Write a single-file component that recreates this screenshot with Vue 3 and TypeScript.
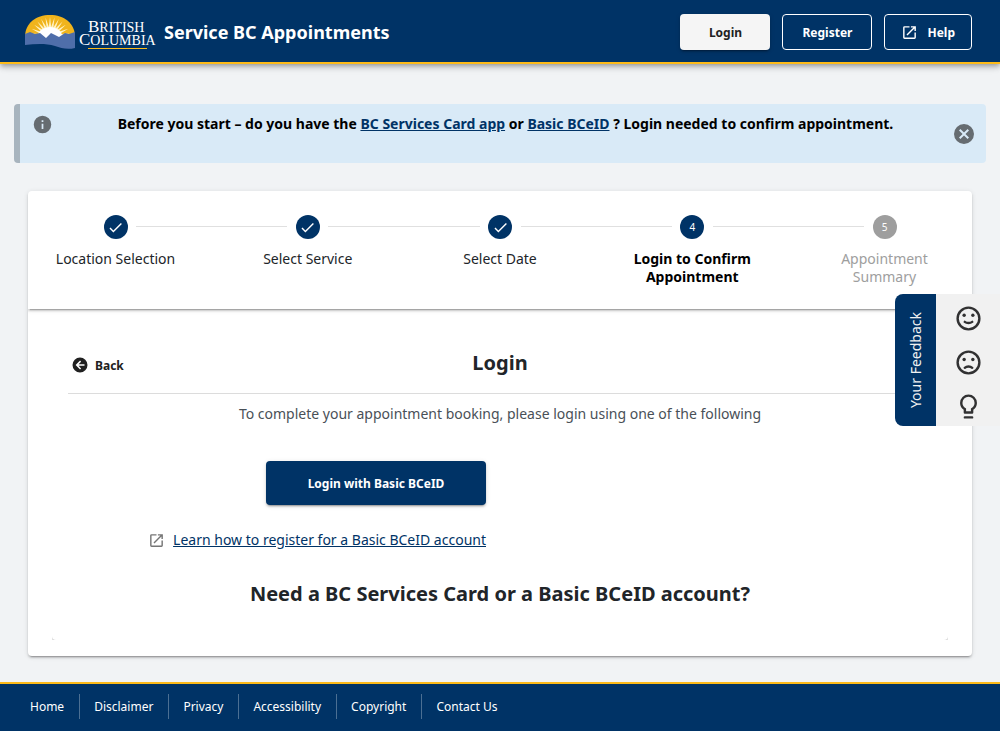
<script setup lang="ts">
import { ref } from 'vue'

interface Step {
  label: string
  state: 'done' | 'current' | 'upcoming'
}

const steps: Step[] = [
  { label: 'Location Selection', state: 'done' },
  { label: 'Select Service', state: 'done' },
  { label: 'Select Date', state: 'done' },
  { label: 'Login to Confirm Appointment', state: 'current' },
  { label: 'Appointment Summary', state: 'upcoming' },
]

const footerLinks: string[] = ['Home', 'Disclaimer', 'Privacy', 'Accessibility', 'Copyright', 'Contact Us']

// Angles, in degrees, of the rays of the rising sun
const rays: number[] = [-80, -66, -52, -39, -26, -13, 0, 13, 26, 39, 52, 66, 80]

const alertOpen = ref(true)
</script>

<template>
  <div class="page">
    <header class="topbar">
      <a class="brand" href="#">
        <svg class="logo" viewBox="0 0 132 36" role="img" aria-label="British Columbia">
          <defs>
            <clipPath id="sun-disc">
              <path d="M1 23C1 9 12 1 26 1S51 9 51 23V28H1Z" />
            </clipPath>
          </defs>
          <g clip-path="url(#sun-disc)">
            <rect width="52" height="30" fill="#f0b41c" />
            <path
              v-for="angle in rays"
              :key="angle"
              d="M24 20L26 3L28 20Z"
              fill="#fff3c4"
              :transform="`rotate(${angle} 26 23)`"
            />
            <ellipse cx="26" cy="22" rx="12" ry="9" fill="#fff" />
          </g>
          <path
            d="M1 20L6 18L11 20L16 19L22 24L27 19L31 21L35 23L41 19L45 20L51 18V34C43 36 37 34 31 32C21 29 11 30 1 31Z"
            fill="#4f6eaa"
          />
          <g class="logo-text">
            <text x="64" y="18"><tspan font-size="17">B</tspan><tspan font-size="14">RITISH</tspan></text>
            <text x="55" y="31"><tspan font-size="17">C</tspan><tspan font-size="14">OLUMBIA</tspan></text>
          </g>
          <rect x="64" y="34" width="59" height="1" fill="#fcba19" />
        </svg>
        <span class="title">Service BC Appointments</span>
      </a>
      <nav class="actions" aria-label="Account">
        <button type="button" class="btn btn-light">Login</button>
        <button type="button" class="btn btn-outline">Register</button>
        <button type="button" class="btn btn-outline btn-help">
          <svg class="icon-open" viewBox="0 0 24 24" aria-hidden="true">
            <path
              d="M14 3v2h3.59l-9.83 9.83 1.41 1.41L19 6.41V10h2V3m-2 16H5V5h7V3H5a2 2 0 0 0-2 2v14a2 2 0 0 0 2 2h14a2 2 0 0 0 2-2v-7h-2z"
            />
          </svg>
          Help
        </button>
      </nav>
    </header>

    <main class="main">
      <div v-if="alertOpen" class="alert" role="status">
        <svg class="icon-info" viewBox="0 0 24 24" aria-hidden="true">
          <path d="M13 9h-2V7h2m0 10h-2v-6h2m-1-9a10 10 0 1 0 0 20 10 10 0 0 0 0-20" />
        </svg>
        <p class="alert-text">
          Before you start – do you have the <a href="#">BC Services Card app</a> or <a href="#">Basic BCeID</a> ? Login
          needed to confirm appointment.
        </p>
        <button type="button" class="alert-close" aria-label="Close" @click="alertOpen = false">
          <svg viewBox="0 0 24 24" aria-hidden="true">
            <path
              d="M12 2a10 10 0 1 0 0 20 10 10 0 0 0 0-20m5 13.590L15.590 17 12 13.410 8.410 17 7 15.590 10.590 12 7 8.410 8.410 7 12 10.590 15.590 7 17 8.410 13.410 12z"
            />
          </svg>
        </button>
      </div>

      <section class="card">
        <ol class="stepper">
          <template v-for="(step, index) in steps" :key="step.label">
            <li v-if="index > 0" class="divider" role="presentation"></li>
            <li class="step" :class="step.state" :aria-current="step.state === 'current' ? 'step' : undefined">
              <span class="bullet">
                <svg v-if="step.state === 'done'" viewBox="0 0 24 24" aria-hidden="true">
                  <path d="M21 7L9 19l-5.500-5.500 1.410-1.410L9 16.170 19.590 5.590z" />
                </svg>
                <template v-else>{{ index + 1 }}</template>
              </span>
              <span class="label">{{ step.label }}</span>
            </li>
          </template>
        </ol>

        <div class="content">
          <div class="panel-clip">
            <div class="panel">
              <div class="panel-head">
                <button type="button" class="back">
                  <svg viewBox="0 0 24 24" aria-hidden="true">
                    <path
                      d="M2 12a10 10 0 1 1 20 0 10 10 0 0 1-20 0m16-1h-8l3.500-3.500-1.420-1.420L6.160 12l5.920 5.920 1.420-1.420L10 13h8z"
                    />
                  </svg>
                  Back
                </button>
                <h1>Login</h1>
              </div>
              <p class="intro">To complete your appointment booking, please login using one of the following</p>
              <div class="options">
                <div class="option">
                  <button type="button" class="btn btn-primary">Login with Basic BCeID</button>
                  <div class="learn">
                    <svg class="icon-open" viewBox="0 0 24 24" aria-hidden="true">
                      <path
                        d="M14 3v2h3.590l-9.830 9.830 1.410 1.410L19 6.410V10h2V3m-2 16H5V5h7V3H5a2 2 0 0 0-2 2v14a2 2 0 0 0 2 2h14a2 2 0 0 0 2-2v-7h-2z"
                      />
                    </svg>
                    <a href="#">Learn how to register for a Basic BCeID account</a>
                  </div>
                </div>
              </div>
              <h2>Need a BC Services Card or a Basic BCeID account?</h2>
            </div>
          </div>
        </div>
      </section>
    </main>

    <footer class="footer">
      <a v-for="link in footerLinks" :key="link" href="#">{{ link }}</a>
    </footer>

    <aside class="feedback" aria-label="Feedback">
      <button type="button" class="feedback-tab"><span>Your Feedback</span></button>
      <div class="feedback-icons">
        <button type="button" aria-label="Compliment">
          <svg viewBox="0 0 24 24" aria-hidden="true">
            <circle cx="12" cy="12" r="9" class="line" />
            <circle cx="8.400" cy="9.300" r="1.400" />
            <circle cx="15.600" cy="9.300" r="1.400" />
            <path d="M8.900 14.800C10.500 16 13.500 16 15.100 14.800" class="line" />
          </svg>
        </button>
        <button type="button" aria-label="Complaint">
          <svg viewBox="0 0 24 24" aria-hidden="true">
            <circle cx="12" cy="12" r="9" class="line" />
            <circle cx="8.400" cy="9.500" r="1.400" />
            <circle cx="15.600" cy="9.500" r="1.400" />
            <path d="M8.900 16.400C10.500 15 13.500 15 15.100 16.400" class="line" />
          </svg>
        </button>
        <button type="button" aria-label="Suggestion">
          <svg viewBox="0 0 24 24" aria-hidden="true">
            <path
              d="M12 2a7 7 0 0 1 7 7c0 2.380-1.190 4.470-3 5.740V17a1 1 0 0 1-1 1H9a1 1 0 0 1-1-1v-2.260C6.190 13.470 5 11.380 5 9a7 7 0 0 1 7-7M9 22a1 1 0 0 1 0-2h6a1 1 0 0 1 0 2zM12 4a5 5 0 0 0-5 5c0 2.050 1.230 3.810 3 4.580V16h4v-2.420c1.770-.770 3-2.530 3-4.580a5 5 0 0 0-5-5"
            />
          </svg>
        </button>
      </div>
    </aside>
  </div>
</template>

<style>
body {
  margin: 0;
  background: #f1f3f5;
}
</style>

<style scoped>
.page {
  display: flex;
  flex-direction: column;
  min-height: 100vh;
  background: #f1f3f5;
  color: #212529;
  font-family: 'Noto Sans', sans-serif;
  font-size: 14px;
}

.page *,
.page {
  box-sizing: border-box;
}

svg {
  display: block;
  fill: currentColor;
}

button {
  font-family: inherit;
  cursor: pointer;
}

.topbar {
  display: flex;
  align-items: center;
  justify-content: space-between;
  height: 64px;
  padding: 2px 28px 0 24px;
  background: #003366;
  border-bottom: 2px solid #fcba19;
  box-shadow: 0 2px 4px -1px rgba(0, 0, 0, 0.2), 0 4px 5px rgba(0, 0, 0, 0.14), 0 1px 10px rgba(0, 0, 0, 0.12);
}

.brand {
  display: flex;
  align-items: center;
  gap: 8px;
  color: #fff;
  text-decoration: none;
}

.logo {
  width: 132px;
  height: 36px;
}

.logo-text {
  fill: #fff;
  font-family: 'Liberation Serif', serif;
}

.title {
  font-size: 18px;
  font-weight: 700;
}

.actions {
  display: flex;
  gap: 12px;
}

.btn {
  display: flex;
  align-items: center;
  justify-content: center;
  border: 0;
  border-radius: 4px;
  font-size: 12px;
  font-weight: 700;
}

.actions .btn {
  min-width: 90px;
  height: 36px;
  padding: 0 16px;
}

.btn-light {
  background: #f5f5f5;
  color: #212121;
  box-shadow: 0 3px 1px -2px rgba(0, 0, 0, 0.2), 0 2px 2px rgba(0, 0, 0, 0.14), 0 1px 5px rgba(0, 0, 0, 0.12);
}

.actions .btn-outline {
  border: 1px solid #fff;
  background: transparent;
  color: #fff;
}

.actions .btn-help {
  gap: 9px;
  min-width: 64px;
}

.icon-open {
  width: 17px;
  height: 17px;
}

.main {
  flex: 1;
  padding: 40px 14px 25px;
}

.alert {
  display: flex;
  align-items: flex-start;
  gap: 4px;
  min-height: 59px;
  padding: 10px 10px 10px 12px;
  border-left: 6px solid #a8b4be;
  border-radius: 4px;
  background: #d9eaf7;
  color: #000;
}

.icon-info {
  flex: none;
  width: 21px;
  height: 21px;
  color: #666c71;
}

.alert-text {
  flex: 1;
  margin: 0;
  padding-left: 6px;
  font-weight: 700;
  line-height: 20px;
  text-align: center;
}

.alert-text a,
.learn a {
  color: #003366;
  text-decoration: underline;
}

.alert-close {
  flex: none;
  align-self: center;
  padding: 0;
  border: 0;
  background: none;
  color: #666c71;
}

.alert-close svg {
  width: 24px;
  height: 24px;
}

.card {
  margin: 28px 14px 0;
  border-radius: 4px;
  background: #fff;
  box-shadow: 0 3px 1px -2px rgba(0, 0, 0, 0.2), 0 2px 2px rgba(0, 0, 0, 0.14), 0 1px 5px rgba(0, 0, 0, 0.12);
}

.stepper {
  display: flex;
  justify-content: space-between;
  margin: 0;
  padding: 0;
  list-style: none;
  box-shadow: 0 3px 1px -2px rgba(0, 0, 0, 0.2), 0 2px 2px rgba(0, 0, 0, 0.14), 0 1px 5px rgba(0, 0, 0, 0.12);
  clip-path: inset(0 0 -8px 0);
}

.step {
  display: flex;
  flex: 0 0 175px;
  flex-direction: column;
  align-items: center;
  gap: 11px;
  padding: 24px 24px 23px;
  text-align: center;
  line-height: 18px;
}

.divider {
  flex: 1;
  height: 1px;
  margin: 35px -67px 0;
  background: #e0e0e0;
}

.bullet {
  display: flex;
  align-items: center;
  justify-content: center;
  width: 24px;
  height: 24px;
  border-radius: 50%;
  background: #003366;
  color: #fff;
  font-size: 10px;
}

.bullet svg {
  width: 17px;
  height: 17px;
}

.current .label {
  color: #000;
  font-weight: 700;
}

.upcoming .label {
  color: #9e9e9e;
}

.upcoming .bullet {
  background: #9e9e9e;
}

.content {
  padding: 0 24px 16px;
}

.panel-clip {
  overflow: hidden;
}

.panel {
  padding: 32px 16px;
  border-radius: 0 0 4px 4px;
  background: #fff;
  box-shadow: 0 2px 2px rgba(0, 0, 0, 0.14), 0 1px 5px rgba(0, 0, 0, 0.12);
}

.panel-head {
  display: grid;
  grid-template-columns: 1fr auto 1fr;
  align-items: center;
  height: 53px;
  padding-bottom: 4px;
  border-bottom: 1px solid #dcdcdc;
}

.back {
  display: flex;
  align-items: center;
  justify-self: start;
  gap: 6px;
  padding: 0 3px;
  border: 0;
  background: none;
  color: #212121;
  font-size: 12px;
  font-weight: 700;
}

.back svg {
  width: 18px;
  height: 18px;
}

h1,
h2 {
  margin: 0;
  font-size: 20px;
  font-weight: 700;
  line-height: 28px;
  text-align: center;
}

.panel-head h1 {
  padding-bottom: 4px;
}

.intro {
  margin: 10px 0 0;
  color: #495057;
  line-height: 20px;
  text-align: center;
}

.options {
  display: grid;
  grid-template-columns: 1fr 1fr;
  gap: 28px;
  margin-top: 37px;
}

.option {
  display: flex;
  flex-direction: column;
  align-items: flex-end;
  gap: 25px;
}

.btn-primary {
  width: 220px;
  height: 44px;
  background: #003366;
  color: #fff;
  box-shadow: 0 3px 1px -2px rgba(0, 0, 0, 0.2), 0 2px 2px rgba(0, 0, 0, 0.14), 0 1px 5px rgba(0, 0, 0, 0.12);
}

.learn {
  display: flex;
  align-items: center;
  gap: 8px;
  color: #757575;
  line-height: 20px;
}

h2 {
  margin-top: 30px;
}

.footer {
  display: flex;
  align-items: center;
  height: 49px;
  padding: 0 16px 2px;
  border-top: 2px solid #fcba19;
  background: #003366;
  font-size: 12px;
}

.footer a {
  padding: 0 15px 0 14px;
  border-right: 1px solid #4b6f93;
  color: #fff;
  line-height: 25px;
  text-decoration: none;
}

.footer a:last-child {
  border-right: 0;
}

.feedback {
  position: fixed;
  top: 294px;
  right: 0;
  display: flex;
}

.feedback-tab {
  width: 41px;
  padding: 0;
  border: 0;
  border-radius: 8px 0 0 8px;
  background: #003366;
  color: #f1f1f1;
  font-size: 14px;
}

.feedback-tab span {
  display: block;
  margin: 0 auto;
  writing-mode: vertical-rl;
  transform: rotate(180deg);
}

.feedback-icons {
  background: #f1f1f1;
}

.feedback-icons button {
  display: flex;
  align-items: center;
  justify-content: center;
  width: 64px;
  height: 44px;
  padding: 4px 0 0;
  border: 0;
  background: none;
  color: #313132;
}

.feedback-icons svg {
  width: 29px;
  height: 29px;
}

.line {
  fill: none;
  stroke: currentColor;
  stroke-width: 2;
  stroke-linecap: round;
}
</style>
